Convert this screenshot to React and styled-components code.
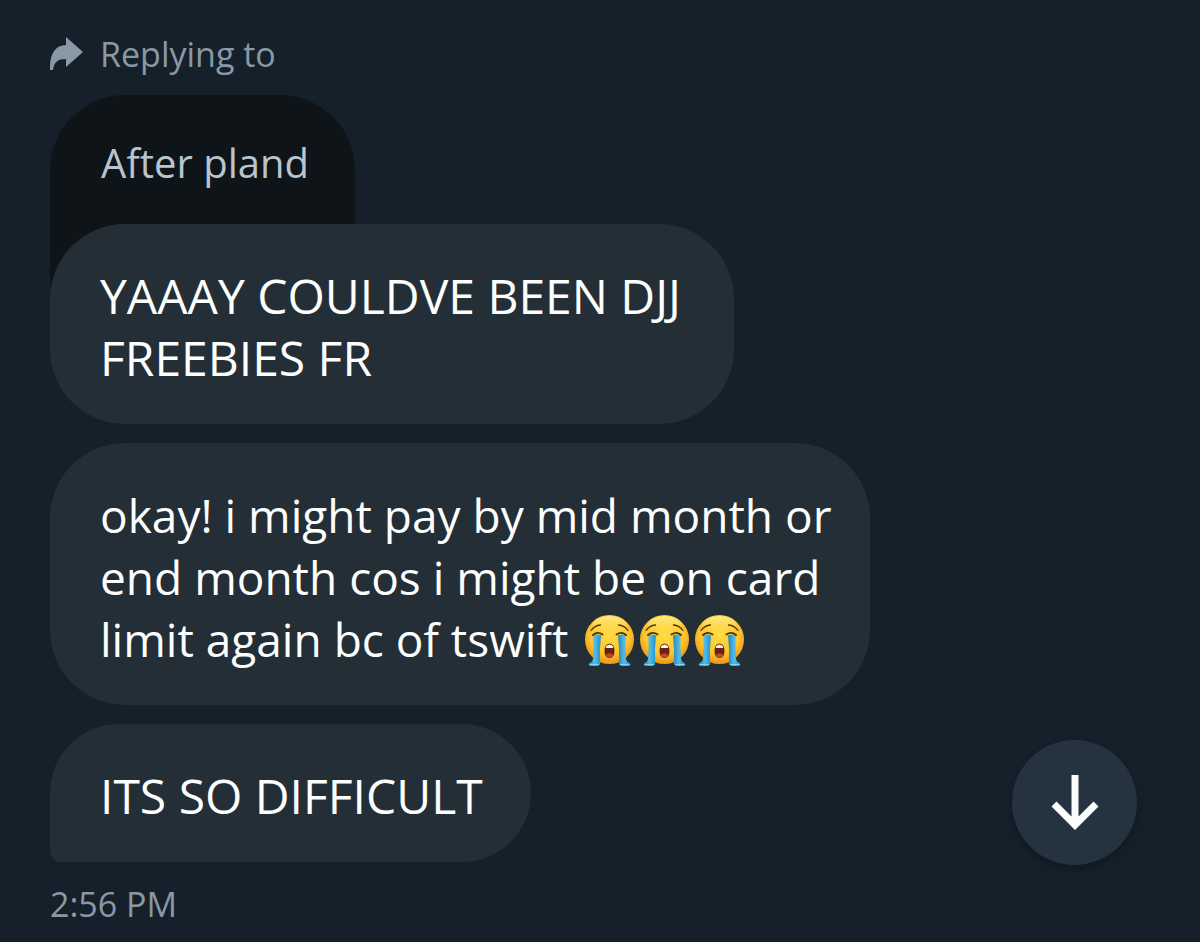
import React from "react";
import styled, { createGlobalStyle } from "styled-components";

const colors = {
  page: "#16202a",
  bubble: "#242e36",
  quote: "#0f1418",
  fab: "#253341",
  text: "#fcfdfd",
  muted: "#8899a6",
  quoteText: "#b8c5cf",
};

const GlobalStyle = createGlobalStyle`
  * {
    box-sizing: border-box;
  }

  body {
    margin: 0;
    background: ${colors.page};
    font-family: "Open Sans", "Noto Sans", sans-serif;
  }
`;

// *************************************
// Layout
// *************************************

const Chat = styled.main`
  position: relative;
  min-height: 100vh;
  padding: 30px 50px 12px;
`;

const Thread = styled.div`
  display: flex;
  flex-direction: column;
  align-items: flex-start;
`;

const Messages = styled.div`
  display: flex;
  flex-direction: column;
  align-items: flex-start;
  gap: 19px;
  max-width: 100%;
  margin-top: -76px; // slides over the quoted message
`;

// *************************************
// Reply header + quoted message
// *************************************

const ReplyLabel = styled.div`
  display: flex;
  align-items: center;
  gap: 16px;
  height: 48px;
  margin-bottom: 17px;

  color: ${colors.muted};
  font-size: 34px;
  line-height: 48px;
`;

const ReplyIcon = styled.svg`
  width: 34px;
  height: 34px;
  fill: currentColor;
`;

const Quote = styled.blockquote`
  width: 305px;
  height: 205px;
  margin: 0;
  padding: 39px 0 0 51px;

  border-radius: 75px 75px 0 0;
  background: ${colors.quote};
  color: ${colors.quoteText};
  font-size: 40px;
  line-height: 58px;
  white-space: nowrap;
`;

// *************************************
// Bubbles
// *************************************

const Bubble = styled.p`
  position: relative;
  width: ${({ $width }) => $width}px;
  max-width: 100%;
  margin: 0;
  padding: 41px 0 35px 50px;

  border-radius: ${({ $last }) => ($last ? "75px 75px 75px 12px" : "75px")};
  background: ${colors.bubble};
  color: ${colors.text};
  font-size: ${({ $long }) => ($long ? 46 : 48)}px;
  line-height: 62px;
  white-space: pre-line;
`;

const Time = styled.time`
  margin-top: 18px;

  color: ${colors.muted};
  font-size: 34px;
  line-height: 48px;
`;

const Faces = styled.span`
  display: inline-flex;
  gap: 4px;
  height: 52px;
  margin-left: 4px;
  vertical-align: -10px;
`;

const FaceSvg = styled.svg`
  width: 51px;
  height: 52px;
`;

const ScrollButton = styled.button`
  position: absolute;
  right: 63px;
  bottom: 77px;

  display: flex;
  align-items: center;
  justify-content: center;
  width: 125px;
  height: 125px;
  padding: 0;

  border: none;
  border-radius: 50%;
  background: ${colors.fab};
  box-shadow: 0 4px 8px rgba(0, 0, 0, 0.25);
  color: ${colors.text};
  cursor: pointer;
`;

const ArrowSvg = styled.svg`
  width: 48px;
  height: 58px;
  fill: none;
  stroke: currentColor;
  stroke-width: 7;
`;

function CryingFace() {
  return (
    <FaceSvg viewBox="0 0 51 52" role="img" aria-label="😭">
      <defs>
        <radialGradient id="skin" cx="50%" cy="40%" r="62%">
          <stop offset="0" stopColor="#ffdc45" />
          <stop offset="0.65" stopColor="#fcc62c" />
          <stop offset="1" stopColor="#e88f17" />
        </radialGradient>
        <linearGradient id="shine" x1="0" y1="0" x2="0" y2="1">
          <stop offset="0" stopColor="#fff3a8" stopOpacity="0.8" />
          <stop offset="1" stopColor="#ffe24a" stopOpacity="0" />
        </linearGradient>
        <linearGradient id="tear" x1="0" y1="0" x2="1" y2="0">
          <stop offset="0" stopColor="#2187b8" />
          <stop offset="0.5" stopColor="#55bbe8" />
          <stop offset="1" stopColor="#1e91ca" />
        </linearGradient>
      </defs>
      <circle cx="25.5" cy="24.5" r="24.5" fill="url(#skin)" />
      <ellipse cx="25.5" cy="10" rx="17" ry="9" fill="url(#shine)" />
      <path
        d="M9.500 20.500Q13 18.500 17 20.500Q15.500 34 16 46.500Q17 50.500 13 51H6Q3 49.500 6 47.500Q8.500 47.500 9 43Q10 33 9.500 20.500Z"
        fill="url(#tear)"
      />
      <path
        d="M41.500 20.500Q38 18.500 34 20.500Q35.500 34 35 46.500Q34 50.500 38 51H45Q48 49.500 45 47.500Q42.500 47.500 42 43Q41 33 41.500 20.500Z"
        fill="url(#tear)"
      />
      <path d="M5.500 49.500H15M36 49.500H45.500" stroke="#7fd4f3" strokeWidth="1" />
      <g fill="none" stroke="#513016" strokeLinecap="round">
        <path d="M7 15.500Q10.500 10.500 16.500 10" strokeWidth="1.300" />
        <path d="M44 15.500Q40.500 10.500 34.500 10" strokeWidth="1.300" />
        <path d="M9 20Q13.500 16 18.500 19.500" strokeWidth="1.900" />
        <path d="M42 20Q37.500 16 32.500 19.500" strokeWidth="1.900" />
      </g>
      <path
        d="M25.500 28.500Q30.500 29 30.500 36Q30.500 43 25.500 43Q20.500 43 20.500 36Q20.500 29 25.500 28.500Z"
        fill="#66210f"
      />
      <path d="M21.500 40Q25.500 36.500 29.500 40Q28 42.500 25.500 42.500Q23 42.500 21.500 40Z" fill="#c8432c" />
      <path d="M21.500 32Q25.500 27 29.500 32L28.500 33H22.500Z" fill="#fff" />
    </FaceSvg>
  );
}

export default function App() {
  return (
    <>
      <GlobalStyle />
      <Chat>
        <Thread>
          <ReplyLabel>
            <ReplyIcon viewBox="0 0 34 34" aria-hidden="true">
              <path d="M16 0L33 15L16 30V22C8 22 4 25 3 33H0C-0.500 17 5 8.500 16 8Z" />
            </ReplyIcon>
            Replying to
          </ReplyLabel>
          <Quote>After pland</Quote>

          <Messages>
            <Bubble $width={684}>{"YAAAY COULDVE BEEN DJJ\nFREEBIES FR"}</Bubble>
            <Bubble $width={820} $long>
              {"okay! i might pay by mid month or\nend month cos i might be on card\nlimit again bc of tswift "}
              <Faces>
                <CryingFace />
                <CryingFace />
                <CryingFace />
              </Faces>
            </Bubble>
            <Bubble $width={481} $last>
              ITS SO DIFFICULT
            </Bubble>
          </Messages>
          <Time>2:56 PM</Time>
        </Thread>

        <ScrollButton type="button" aria-label="Scroll to latest message">
          <ArrowSvg viewBox="0 0 48 58" aria-hidden="true">
            <path d="M24 1V50M3 30L24 51L45 30" />
          </ArrowSvg>
        </ScrollButton>
      </Chat>
    </>
  );
}
